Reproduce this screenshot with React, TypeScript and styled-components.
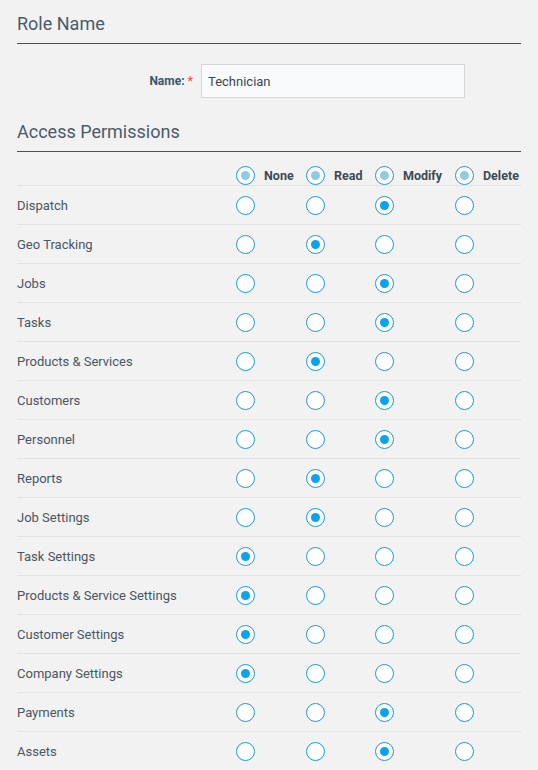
import React, { useState } from 'react';
import styled, { createGlobalStyle } from 'styled-components';

const GlobalStyle = createGlobalStyle`
  html, body {
    margin: 0;
    padding: 0;
    background: #f2f2f2;
    font-family: Roboto, "Liberation Sans", Arial, sans-serif;
  }
`;

type Level = 'None' | 'Read' | 'Modify' | 'Delete';

const LEVELS: Level[] = ['None', 'Read', 'Modify', 'Delete'];

const INITIAL: { name: string; level: Level }[] = [
  { name: 'Dispatch', level: 'Modify' },
  { name: 'Geo Tracking', level: 'Read' },
  { name: 'Jobs', level: 'Modify' },
  { name: 'Tasks', level: 'Modify' },
  { name: 'Products & Services', level: 'Read' },
  { name: 'Customers', level: 'Modify' },
  { name: 'Personnel', level: 'Modify' },
  { name: 'Reports', level: 'Read' },
  { name: 'Job Settings', level: 'Read' },
  { name: 'Task Settings', level: 'None' },
  { name: 'Products & Service Settings', level: 'None' },
  { name: 'Customer Settings', level: 'None' },
  { name: 'Company Settings', level: 'None' },
  { name: 'Payments', level: 'Modify' },
  { name: 'Assets', level: 'Modify' },
];

const App: React.FC = () => {
  const [roleName, setRoleName] = useState('Technician');
  const [rows, setRows] = useState(INITIAL);

  const setAll = (level: Level) => setRows(rows.map((r) => ({ ...r, level })));
  const setOne = (i: number, level: Level) =>
    setRows(rows.map((r, j) => (j === i ? { ...r, level } : r)));

  return (
    <>
      <GlobalStyle />
      <Page>
        <SectionTitle>Role Name</SectionTitle>
        <FieldRow>
          <FieldLabel>
            Name:<Required>*</Required>
          </FieldLabel>
          <TextInput value={roleName} onChange={(e) => setRoleName(e.target.value)} />
        </FieldRow>

        <SectionTitle>Access Permissions</SectionTitle>
        <HeaderRow>
          <span />
          {LEVELS.map((level) => (
            <HeaderCell key={level} onClick={() => setAll(level)}>
              <Radio $header />
              <HeaderLabel>{level}</HeaderLabel>
            </HeaderCell>
          ))}
        </HeaderRow>
        {rows.map((row, i) => (
          <PermRow key={row.name}>
            <RowLabel>{row.name}</RowLabel>
            {LEVELS.map((level) => (
              <RadioCell key={level} onClick={() => setOne(i, level)}>
                <Radio $checked={row.level === level} />
              </RadioCell>
            ))}
          </PermRow>
        ))}
      </Page>
    </>
  );
};

export default App;

const Page = styled.div`
  padding: 0 17px;
`;

const SectionTitle = styled.h2`
  margin: 0;
  padding: 12px 0 7px;
  font-size: 18px;
  line-height: 24px;
  font-weight: 400;
  color: #4a5a6b;
  border-bottom: 1px solid #3d5466;
`;

const FieldRow = styled.div`
  display: flex;
  align-items: center;
  padding: 20px 0 10px 125px;
`;

const FieldLabel = styled.label`
  width: 51px;
  text-align: right;
  font-size: 12px;
  font-weight: 700;
  color: #3b5568;
  margin-right: 8px;
`;

const Required = styled.span`
  color: #ea5a5a;
  margin-left: 3px;
`;

const TextInput = styled.input`
  box-sizing: border-box;
  width: 264px;
  height: 34px;
  padding: 0 6px;
  border: 1px solid #d6d6d6;
  background: #f9fafc;
  font-family: Roboto, "Liberation Sans", Arial, sans-serif;
  font-size: 13px;
  color: #3d4650;
  outline: none;
`;

const Grid = styled.div`
  display: grid;
  grid-template-columns: 1fr 70px 69px 80px 66px;
  align-items: center;
  border-bottom: 1px solid #e2e2e2;
`;

const HeaderRow = styled(Grid)`
  padding: 13px 0 0;
  height: 20px;
`;

const PermRow = styled(Grid)`
  height: 38px;
`;

const HeaderCell = styled.div`
  display: flex;
  align-items: center;
  gap: 9px;
  cursor: pointer;
`;

const HeaderLabel = styled.span`
  font-size: 12.5px;
  font-weight: 700;
  color: #3d4a55;
`;

const RadioCell = styled.div`
  display: flex;
  cursor: pointer;
`;

const RowLabel = styled.span`
  font-size: 13px;
  color: #4a5661;
`;

const Radio = styled.span<{ $checked?: boolean; $header?: boolean }>`
  box-sizing: border-box;
  width: 19px;
  height: 19px;
  border-radius: 50%;
  border: 1.5px solid #1c9ad3;
  background: #fff;
  display: flex;
  align-items: center;
  justify-content: center;
  flex-shrink: 0;

  &::after {
    content: '';
    width: 9px;
    height: 9px;
    border-radius: 50%;
    background: ${(p) => (p.$header ? '#8ecbe6' : '#0aa4ec')};
    display: ${(p) => (p.$checked || p.$header ? 'block' : 'none')};
  }
`;
